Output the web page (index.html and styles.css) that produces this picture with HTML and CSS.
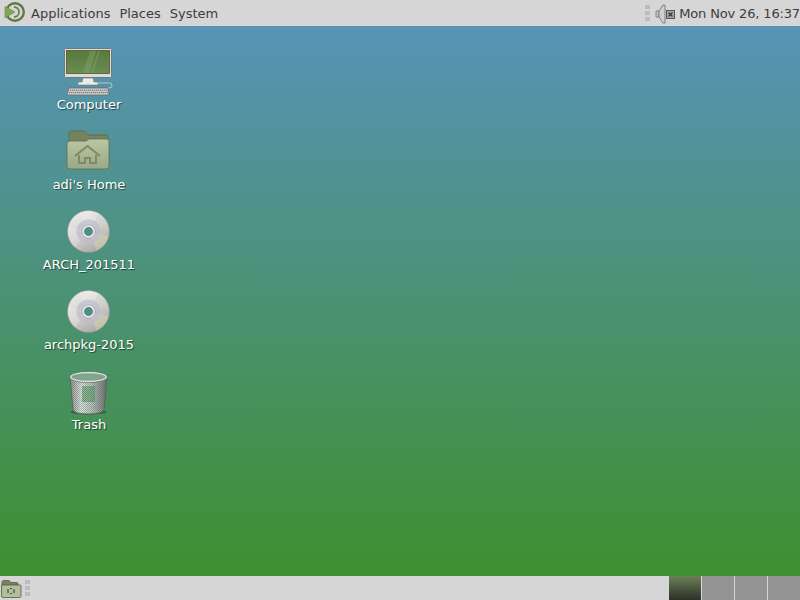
FILE: index.html
```html
<!DOCTYPE html>
<html lang="en">
<head>
  <meta charset="UTF-8">
  <title>Desktop</title>
  <link rel="stylesheet" href="styles.css">
</head>
<body>
  <svg class="defs" width="0" height="0">
    <defs>
      <linearGradient id="discFill" x1="0.2" y1="0" x2="0.8" y2="1">
        <stop offset="0" stop-color="#ececea"/>
        <stop offset="0.55" stop-color="#cdcdc9"/>
        <stop offset="1" stop-color="#a2a29e"/>
      </linearGradient>
      <linearGradient id="folderFill" x1="0" y1="0" x2="0" y2="1">
        <stop offset="0" stop-color="#bac7a2"/>
        <stop offset="1" stop-color="#9aaa86"/>
      </linearGradient>
      <linearGradient id="screenFill" x1="0" y1="0" x2="0" y2="1">
        <stop offset="0" stop-color="#557a3c"/>
        <stop offset="1" stop-color="#6c8c52"/>
      </linearGradient>
      <linearGradient id="binFill" x1="0" y1="0" x2="1" y2="0">
        <stop offset="0" stop-color="#8d9591"/>
        <stop offset="0.3" stop-color="#dfe3e0"/>
        <stop offset="0.6" stop-color="#b9c3bd"/>
        <stop offset="1" stop-color="#6f7773"/>
      </linearGradient>
      <pattern id="mesh" width="2" height="2" patternUnits="userSpaceOnUse">
        <rect width="1" height="1" fill="#2f3a34" opacity="0.3"/>
        <rect x="1" y="1" width="1" height="1" fill="#2f3a34" opacity="0.3"/>
      </pattern>
      <symbol id="disc" viewBox="0 0 44 44">
        <circle cx="22" cy="22" r="21" fill="url(#discFill)" stroke="#8f8f8d" stroke-width="0.6"/>
        <path d="M22 22 L13 3 A21 21 0 0 1 32 4 Z" fill="#fff" opacity="0.22"/>
        <path d="M22 22 L42 27 A21 21 0 0 1 30 41 Z" fill="#e0e0b0" opacity="0.4"/>
        <path d="M22 22 L2 17 A21 21 0 0 0 8 38 Z" fill="#fff" opacity="0.18"/>
        <circle cx="22" cy="22" r="12" fill="#bcbace" opacity="0.65"/>
        <circle cx="22" cy="22" r="6.5" fill="#f4f4f4" stroke="#9a9a9a" stroke-width="0.6"/>
        <circle cx="22" cy="22" r="4.4" fill="#4f9080" stroke="#808080" stroke-width="0.5"/>
      </symbol>
    </defs>
  </svg>

  <header class="panel panel-top">
    <svg class="logo" width="22" height="22" viewBox="0 0 22 22">
      <circle cx="12" cy="10" r="8.8" fill="none" stroke="#5f7a45" stroke-width="2.4"/>
      <path d="M11 5 A5 5 0 0 1 11 15" fill="none" stroke="#66804a" stroke-width="1.8"/>
      <path d="M2 4.5 L12 10 L2 16 Z" fill="#83a650" stroke="#6b8a42" stroke-width="0.6"/>
    </svg>
    <nav class="menu">
      <span>Applications</span>
      <span>Places</span>
      <span>System</span>
    </nav>
    <div class="tray">
      <div class="handle"><i></i><i></i><i></i></div>
      <svg class="volume" width="22" height="22" viewBox="0 0 22 22">
        <path d="M1 9 H4 V15 H1 Z" fill="#c4c4c4" stroke="#777" stroke-width="0.8"/>
        <path d="M4 9 L8 3 H10 V21 H8 L4 15 Z" fill="#cfcfcf" stroke="#777" stroke-width="0.9"/>
        <rect x="11.5" y="8.5" width="8" height="8" fill="#a8a8a8" stroke="#555" stroke-width="1"/>
        <path d="M13.5 10.5 L17.5 14.5 M17.5 10.5 L13.5 14.5" stroke="#333" stroke-width="1.2"/>
      </svg>
      <span class="clock">Mon Nov 26, 16:37</span>
    </div>
  </header>

  <main class="desktop">
    <div class="icon">
      <svg width="50" height="50" viewBox="0 0 50 50">
        <rect x="0.5" y="2.5" width="47" height="29" rx="1" fill="#dcdcd8" stroke="#77777a"/>
        <rect x="2.5" y="4.5" width="43" height="23" fill="url(#screenFill)" stroke="#3c4a30" stroke-width="0.7"/>
        <path d="M26 5 H32 L25 27 H19 Z M34 5 H36 L29 27 H27 Z" fill="#8aa672" opacity="0.4"/>
        <path d="M19 32 H29 L30 36 H34 V39 H14 V36 H18 Z" fill="#ececea" stroke="#77777a" stroke-width="0.6"/>
        <path d="M34 37 H46 Q48 37 48 40 Q48 42 45 42 H44" fill="none" stroke="#c9cfcc" stroke-width="0.9"/>
        <path d="M5 42 H44 L45 49 H3 Z" fill="#c8c8c6" stroke="#66686a" stroke-width="0.7"/>
        <path d="M6 44.2 H43 M5 46.6 H44" stroke="#70727a" stroke-width="1" stroke-dasharray="1.2 0.8"/>
      </svg>
      <span class="label">Computer</span>
    </div>
    <div class="icon">
      <svg width="50" height="50" viewBox="0 0 50 50">
        <path d="M5 7 Q5 5 7 5 H20 L24 9 H42 Q44 9 44 11 V24 H5 Z" fill="#76845e" stroke="#5a6648" stroke-width="0.8"/>
        <path d="M3 18 Q3 15 6 15 L22 15 L25 13 H43 Q45 13 45 15 V40 Q45 43 42 43 H6 Q3 43 3 40 Z" fill="url(#folderFill)" stroke="#5f6b4c" stroke-width="0.8"/>
        <path d="M11 30 L23.5 20 L36 30" fill="none" stroke="#7c8a68" stroke-width="2"/>
        <path d="M15 29 V37 H21 V32 H26 V37 H32 V29" fill="none" stroke="#7c8a68" stroke-width="2"/>
      </svg>
      <span class="label">adi's Home</span>
    </div>
    <div class="icon">
      <svg width="50" height="50" viewBox="0 0 50 50"><use href="#disc" x="2.5" y="3.5" width="44" height="44"/></svg>
      <span class="label">ARCH_201511</span>
    </div>
    <div class="icon">
      <svg width="50" height="50" viewBox="0 0 50 50"><use href="#disc" x="2.5" y="3.5" width="44" height="44"/></svg>
      <span class="label">archpkg-2015</span>
    </div>
    <div class="icon">
      <svg width="50" height="50" viewBox="0 0 50 50">
        <ellipse cx="24.5" cy="46" rx="18" ry="2.5" fill="#23482e" opacity="0.6"/>
        <path d="M6 11 L9 44 Q10 48 24.5 48 Q39 48 40 44 L43 11 Z" fill="url(#binFill)" stroke="#5a605c" stroke-width="0.8"/>
        <rect x="18" y="20" width="13" height="16" fill="#4f9a5e" opacity="0.55"/>
        <path d="M6 11 L9 44 Q10 48 24.5 48 Q39 48 40 44 L43 11 Z" fill="url(#mesh)"/>
        <ellipse cx="24.5" cy="11" rx="18" ry="4.6" fill="#7fa58a" stroke="#e0e3e1" stroke-width="1.8"/>
        <ellipse cx="24.5" cy="11" rx="19" ry="5.6" fill="none" stroke="#565c58" stroke-width="0.6"/>
      </svg>
      <span class="label">Trash</span>
    </div>
  </main>

  <footer class="panel panel-bottom">
    <svg class="show-desktop" width="22" height="22" viewBox="0 0 22 22">
      <path d="M2 5 Q2 3.5 3.5 3.5 H9 L11 5.5 H17 Q18 5.5 18 7 V10 H2 Z" fill="#76845e" stroke="#4a5540" stroke-width="0.7"/>
      <path d="M1.5 8 H20 Q21 8 21 9 V19 Q21 20.5 19.5 20.5 H3 Q1.5 20.5 1.5 19 Z" fill="#b2c09a" stroke="#4f5b42" stroke-width="0.8"/>
      <path d="M8 12 V16 M14 12 V16 M10 11.5 H12 M10 16.5 H12" stroke="#444f38" stroke-width="1.2"/>
    </svg>
    <div class="handle"><i></i><i></i><i></i></div>
    <div class="workspaces">
      <div class="workspace active"></div>
      <div class="workspace"></div>
      <div class="workspace"></div>
      <div class="workspace"></div>
    </div>
  </footer>
</body>
</html>
```

FILE: styles.css
```css
html, body {
  height: 100%;
}
body {
  margin: 0;
  display: flex;
  flex-direction: column;
  overflow: hidden;
  font-family: "DejaVu Sans", sans-serif;
  font-size: 13px;
  background: linear-gradient(to bottom, #5894bc 0%, #3d8f2b 100%);
}
.defs {
  flex: none;
  height: 0;
}
.panel {
  display: flex;
  align-items: center;
  background: #d6d6d6;
  color: #3c3c3c;
  flex: none;
}
.panel-top {
  height: 26px;
  padding-left: 3px;
}
.panel-bottom {
  height: 24px;
}
.logo {
  margin-right: 6px;
}
.menu {
  display: flex;
  gap: 9px;
}
.tray {
  display: flex;
  align-items: center;
  margin-left: auto;
  white-space: nowrap;
}
.clock {
  letter-spacing: -0.15px;
}
.handle {
  display: flex;
  flex-direction: column;
  gap: 2px;
  width: 6px;
}
.handle i {
  display: block;
  width: 5px;
  height: 4px;
  background: #bcbcbc;
}
.volume {
  margin-left: 4px;
  margin-right: 2px;
  flex: none;
}
.desktop {
  flex: 1;
  display: flex;
  flex-direction: column;
  align-items: flex-start;
  padding: 20px 0 0 39px;
  min-height: 0;
}
.icon {
  width: 100px;
  height: 80px;
  display: flex;
  flex-direction: column;
  align-items: center;
}
.label {
  margin-top: 1px;
  color: #fff;
  line-height: 16px;
  text-shadow: 1px 1px 1px rgba(0, 0, 0, 0.55);
}
.panel-bottom .handle {
  margin-left: 3px;
}
.workspaces {
  display: flex;
  margin-left: auto;
  height: 100%;
  gap: 1px;
}
.workspace {
  width: 32px;
  background: #949494;
}
.workspace.active {
  background: linear-gradient(to bottom, #6c8058, #2c2f28);
}
```
